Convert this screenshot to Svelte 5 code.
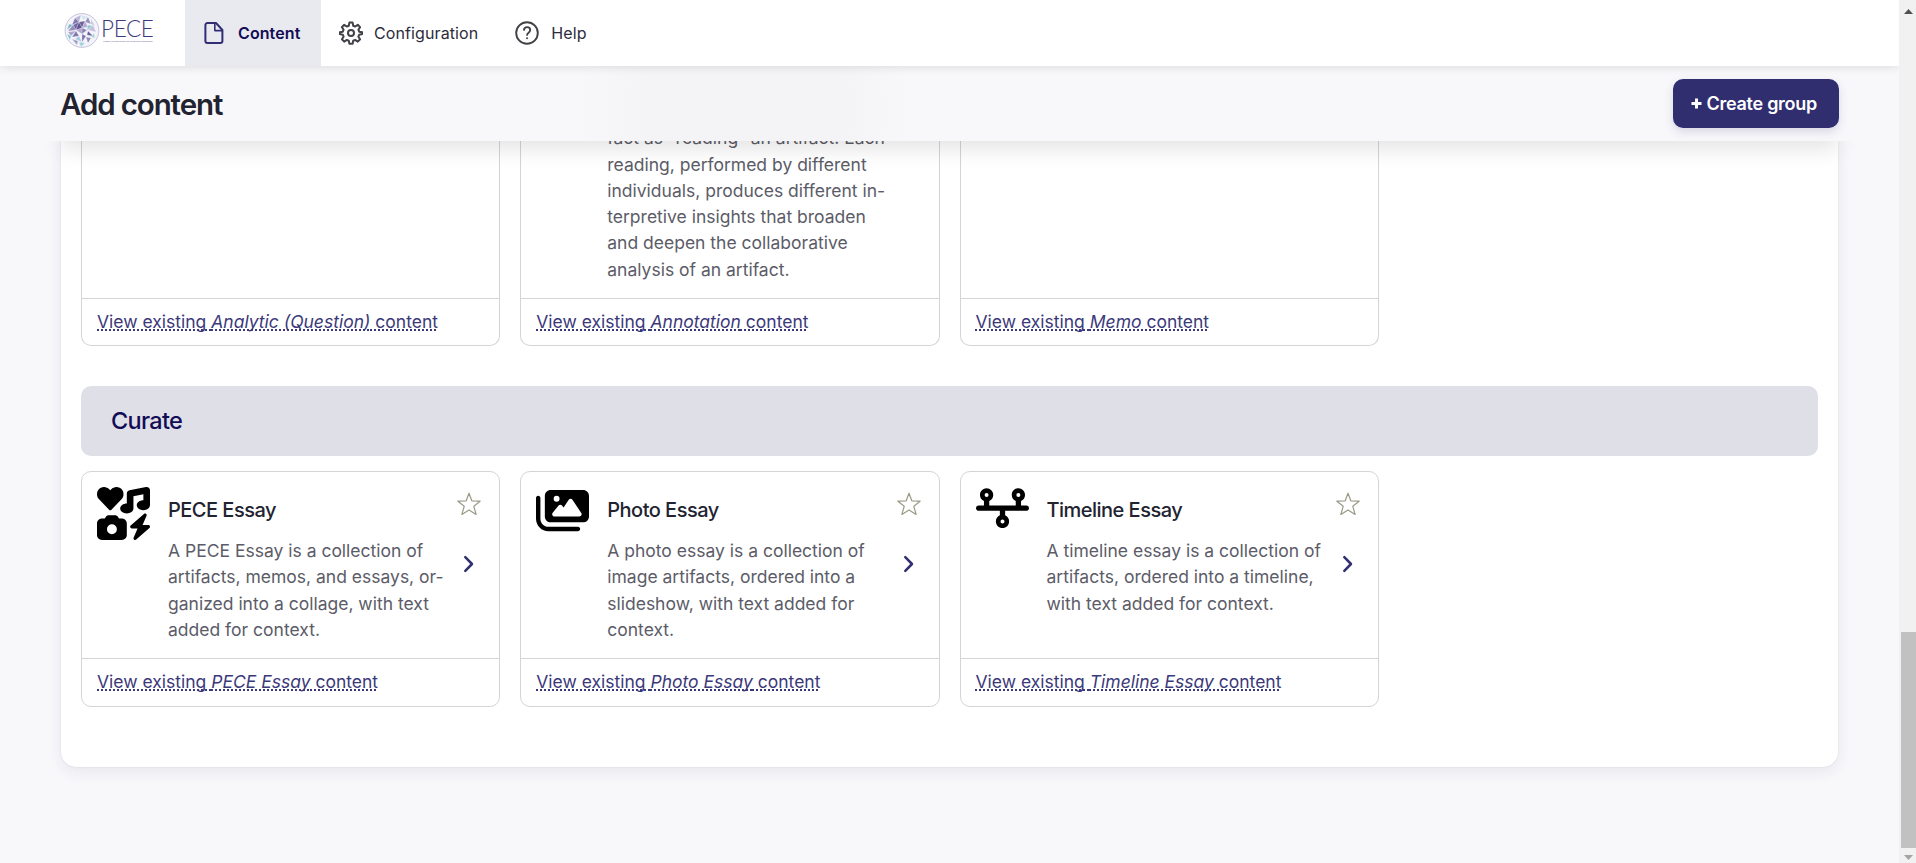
<script>
  const icons = {
    collage: {
      box: '0 0 512 512',
      d: 'M500.3 7.3C507.7 13.3 512 22.4 512 32V176c0 26.5-28.7 48-64 48s-64-21.5-64-48s28.7-48 64-48V71L352 90.2V208c0 26.5-28.7 48-64 48s-64-21.5-64-48s28.7-48 64-48V64c0-15.3 10.8-28.4 25.7-31.4l160-32c9.4-1.9 19.1 .6 26.6 6.6zM74.7 304l11.8-17.8c5.9-8.9 15.9-14.2 26.6-14.2h61.7c10.7 0 20.7 5.3 26.6 14.2L213.3 304H240c26.5 0 48 21.5 48 48V464c0 26.5-21.5 48-48 48H48c-26.5 0-48-21.5-48-48V352c0-26.5 21.5-48 48-48H74.7zM192 408a48 48 0 1 0 -96 0 48 48 0 1 0 96 0zM478.7 278.3L440.3 368H496c6.7 0 12.6 4.1 15 10.4s.6 13.3-4.4 17.7l-128 112c-5.6 4.9-13.9 5.3-19.9 .9s-8.2-12.4-5.3-19.2L391.7 400H336c-6.7 0-12.6-4.1-15-10.4s-.6-13.3 4.4-17.7l128-112c5.6-4.9 13.9-5.3 19.9-.9s8.2 12.4 5.3 19.2zm-339-59.2c-6.5 6.5-17 6.5-23 0L19.9 119.2c-28-29-26.5-76.9 5-103.9c27-23.5 68.4-19 93.4 6.5l10 10.5 9.5-10.5c25-25.5 65.9-30 93.9-6.5c31 27 32.5 74.9 4.5 103.9l-96.4 99.9z'
    },
    images: {
      box: '0 0 576 512',
      d: 'M160 32c-35.3 0-64 28.7-64 64V320c0 35.3 28.7 64 64 64H512c35.3 0 64-28.7 64-64V96c0-35.3-28.7-64-64-64H160zM396 138.7l96 144c4.9 7.4 5.4 16.8 1.2 24.6S480.9 320 472 320H328 280 200c-9.2 0-17.6-5.3-21.6-13.6s-2.9-18.2 2.9-25.4l64-80c4.6-5.7 11.4-9 18.7-9s14.2 3.3 18.7 9l17.3 21.6 56-84C360.5 132 368 128 376 128s15.5 4 20 10.7zM192 128a32 32 0 1 1 64 0 32 32 0 1 1 -64 0zM48 120c0-13.3-10.7-24-24-24S0 106.7 0 120V344c0 75.1 60.9 136 136 136H456c13.3 0 24-10.7 24-24s-10.7-24-24-24H136c-48.6 0-88-39.4-88-88V120z'
    },
    timeline: {
      box: '0 0 640 512',
      d: 'M128 72a24 24 0 1 1 0 48 24 24 0 1 1 0-48zm32 97.3c28.3-12.3 48-40.5 48-73.3c0-44.2-35.8-80-80-80S48 51.8 48 96c0 32.8 19.7 61 48 73.3V224H32c-17.7 0-32 14.3-32 32s14.3 32 32 32H288v54.7c-28.3 12.3-48 40.5-48 73.3c0 44.2 35.8 80 80 80s80-35.8 80-80c0-32.8-19.7-61-48-73.3V288H608c17.7 0 32-14.3 32-32s-14.3-32-32-32H544V169.3c28.3-12.3 48-40.5 48-73.3c0-44.2-35.8-80-80-80s-80 35.8-80 80c0 32.8 19.7 61 48 73.3V224H160V169.3zM488 96a24 24 0 1 1 48 0 24 24 0 1 1 -48 0zM320 392a24 24 0 1 1 0 48 24 24 0 1 1 0-48z'
    }
  };

  // Triangular facets of the globe in the logo: colour, then path.
  const facets = [
    ['#b9b4d6', 'M11 6l6-3-2 7z'],
    ['#cfe6ee', 'M17 3l7 2-5 3z'],
    ['#9a91c0', 'M24 5l3 7-6-2z'],
    ['#c9c4de', 'M27 7l4 7-4-2z'],
    ['#8379b0', 'M11 6l4 4-7 3z'],
    ['#6d6299', 'M15 10l6-1-3 7z'],
    ['#7fb9c9', 'M5 12l4 1-6 5z'],
    ['#7368a3', 'M9 13l6-3-3 8z'],
    ['#968cbd', 'M9 13l3 5-8 1z'],
    ['#5f548f', 'M15 10l3 6-6 2z'],
    ['#b4add2', 'M21 9l3 6-6 1z'],
    ['#8ccad4', 'M24 13l5 1-6 4z'],
    ['#c6c1de', 'M29 13l3 7-8-2z'],
    ['#8a80b4', 'M18 16l5 2-5 4z'],
    ['#aca5cc', 'M4 20l8-1-5 5z'],
    ['#b3a9cf', 'M12 18l6-2v6z'],
    ['#79c3d0', 'M3 22l4 2-1 4z'],
    ['#8278ae', 'M12 19l3 5-7 1z'],
    ['#a8cbe0', 'M15 24l3 6-7-3z'],
    ['#7f75ad', 'M18 22l4 2-4 6z'],
    ['#6a5f99', 'M24 19l5 5-6-1z'],
    ['#a6d5de', 'M30 21l1 5-4-1z'],
    ['#958bbb', 'M22 25l5 1-3 5z'],
    ['#a39bc8', 'M8 27l6 2-1 4z'],
    ['#a5d3dc', 'M15 30l6 1-4 4z']
  ];

  const analysis = [
    { name: 'Analytic (Question)', lines: [] },
    {
      name: 'Annotation',
      lines: [
        'fact as “reading” an artifact. Each',
        'reading, performed by different',
        'individuals, produces different in-',
        'terpretive insights that broaden',
        'and deepen the collaborative',
        'analysis of an artifact.'
      ]
    },
    { name: 'Memo', lines: [] }
  ];

  const curate = [
    {
      name: 'PECE Essay',
      icon: icons.collage,
      lines: ['A PECE Essay is a collection of', 'artifacts, memos, and essays, or-', 'ganized into a collage, with text', 'added for context.']
    },
    {
      name: 'Photo Essay',
      icon: icons.images,
      lines: ['A photo essay is a collection of', 'image artifacts, ordered into a', 'slideshow, with text added for', 'context.']
    },
    {
      name: 'Timeline Essay',
      icon: icons.timeline,
      lines: ['A timeline essay is a collection of', 'artifacts, ordered into a timeline,', 'with text added for context.']
    }
  ];
</script>

{#snippet footer(name)}
  <div class="card-foot"><a href="#top">View existing <em>{name}</em> content</a></div>
{/snippet}

<div class="window">
  <div class="page">
    <nav class="nav">
      <a class="logo" href="#top" aria-label="PECE">
        <svg width="36" height="36" viewBox="0 0 36 36">
          <circle cx="18" cy="18.500" r="16.900" fill="#f3f3fa" stroke="#b0aed0" stroke-width=".7" />
          <g stroke="#fff" stroke-width=".2">
            {#each facets as [fill, d]}<path {fill} {d} />{/each}
          </g>
        </svg>
        <span class="logo-text">
          <span class="logo-name">PECE</span>
          <svg class="logo-sub" width="51" height="4" viewBox="0 0 51 4">
            <text x="0" y="2.800" textLength="50" lengthAdjust="spacingAndGlyphs">Platform for Experimental and Collaborative Ethnography</text>
          </svg>
        </span>
      </a>
      <a class="tab active" href="#top">
        <svg width="20" height="22" viewBox="0 0 20 22" fill="none" stroke="#312e74" stroke-width="2" stroke-linejoin="round">
          <path d="M12 1H3.400a2 2 0 0 0-2 2v16a2 2 0 0 0 2 2h13a2 2 0 0 0 2-2V8z" />
          <path d="M10.800 1v7.600h7.600" stroke-width="1.600" />
        </svg>
        <span>Content</span>
      </a>
      <a class="tab" href="#top">
        <svg width="24" height="24" viewBox="0 0 24 24" fill="none" stroke="#414247" stroke-width="2" stroke-linejoin="round">
          <circle cx="12" cy="12" r="3" />
          <path d="M10.400 1.600h3.200l.6 3.100 2 .8 2.600-1.700 2.300 2.300-1.700 2.600.8 2 3.100.6v1.800l-3.100.6-.8 2 1.700 2.600-2.300 2.300-2.600-1.700-2 .8-.6 3.100h-3.200l-.6-3.100-2-.8-2.600 1.700-2.300-2.300 1.700-2.600-.8-2-3.100-.6v-1.800l3.100-.6.8-2-1.700-2.600 2.300-2.300 2.600 1.700 2-.8z" />
        </svg>
        <span>Configuration</span>
      </a>
      <a class="tab help" href="#top">
        <svg width="24" height="24" viewBox="0 0 24 24" fill="none" stroke="#414247" stroke-width="1.900" stroke-linecap="round">
          <circle cx="12" cy="12" r="10.800" />
          <path d="M9 8.900c.3-3.700 6.200-3.700 6.200.2 0 2.600-3.100 2.500-3.100 4.800" />
          <circle cx="12.100" cy="17.300" r=".4" stroke-width="1.300" />
        </svg>
        <span>Help</span>
      </a>
    </nav>

    <header class="header">
      <div class="header-inner">
        <h1>Add content</h1>
        <a class="button" href="#top"><svg width="11" height="11" viewBox="0 0 11 11"><path d="M5.500.5v10M.5 5.500h10" stroke="#fff" stroke-width="3" /></svg>Create group</a>
      </div>
    </header>

    <main class="panel">
      <section class="grid row-top">
        {#each analysis as item}
          <article class="card">
            <div class="card-body cut">
              <p>{#each item.lines as line}<span>{line}</span>{/each}</p>
            </div>
            {@render footer(item.name)}
          </article>
        {/each}
      </section>

      <h2>Curate</h2>

      <section class="grid row-bottom">
        {#each curate as item}
          <article class="card">
            <div class="card-body">
              <svg class="icon" viewBox={item.icon.box}><path d={item.icon.d} /></svg>
              <div class="copy">
                <h3>{item.name}</h3>
                <p>{#each item.lines as line}<span>{line}</span>{/each}</p>
              </div>
              <div class="actions">
                <svg width="24" height="24" viewBox="0 0 24 24" fill="none" stroke="#9a9a86" stroke-width="1.200" stroke-linejoin="round">
                  <path d="M12 1.200l2.800 7.600 8.300.4-6.300 5.100 2.300 8.100-7.100-4.500-7.100 4.500 2.300-8.100L.9 9.200l8.300-.4z" />
                </svg>
                <svg width="12" height="18" viewBox="0 0 12 18" fill="none" stroke="#312e74" stroke-width="2.500" stroke-linecap="round" stroke-linejoin="round">
                  <path d="M2.300 2.200L9 9l-6.700 6.800" />
                </svg>
              </div>
            </div>
            {@render footer(item.name)}
          </article>
        {/each}
      </section>
    </main>
  </div>

  <div class="scrollbar">
    <svg width="9" height="5" viewBox="0 0 9 5"><path d="M0 5L4.500 0 9 5z" fill="#505050" /></svg>
    <div class="thumb"></div>
    <svg width="9" height="5" viewBox="0 0 9 5"><path d="M0 0h9L4.500 5z" fill="#a3a3a3" /></svg>
  </div>
</div>

<style>
  :global(body) {
    margin: 0;
    background: #f8f8fb;
  }
  .window {
    display: flex;
    height: 863px;
    overflow: hidden;
    font-family: Inter, 'Liberation Sans', sans-serif;
    color: #222330;
  }
  a {
    color: inherit;
    text-decoration: none;
  }
  svg {
    display: block;
    flex: none;
  }
  .page {
    flex: 1;
    display: flex;
    flex-direction: column;
    background: #f8f8fb;
    overflow: hidden;
  }
  .nav {
    position: relative;
    z-index: 3;
    flex: none;
    display: flex;
    height: 66px;
    background: #fff;
    box-shadow: 0 0 10px rgba(0, 0, 0, 0.14);
  }
  .logo {
    box-sizing: border-box;
    width: 185px;
    display: flex;
    gap: 1px;
    padding: 11.500px 0 0 64px;
  }
  .logo-text {
    display: flex;
    flex-direction: column;
    padding-top: 5px;
  }
  .logo-name {
    height: 22px;
    font: 300 22.500px/23px Lato, sans-serif;
    letter-spacing: -0.350px;
    color: #3c3a7c;
  }
  .logo-sub {
    margin-left: 2px;
    overflow: visible;
    font: 400 2.500px Lato, sans-serif;
    fill: #6c6a9c;
  }
  .tab {
    display: flex;
    align-items: center;
    gap: 11px;
    padding: 0 18px;
    font-size: 16px;
    letter-spacing: 0.1px;
    color: #2c2c3c;
  }
  .tab.active {
    box-sizing: border-box;
    width: 136px;
    gap: 14px;
    padding: 0 19px;
    background: #e9e9f0;
    color: #110c55;
    font-weight: 600;
  }
  .tab.help {
    gap: 12px;
    padding-left: 19px;
  }
  .header {
    position: relative;
    z-index: 2;
    flex: none;
    height: 75px;
    padding: 0 60.500px 0 61px;
    background: radial-gradient(ellipse 165px 180px at 745px 45px, #f4f4f6 0%, #f4f4f6 60%, #f8f8fb 100%) #f8f8fb;
  }
  .header-inner {
    display: flex;
    align-items: center;
    justify-content: space-between;
    height: 75px;
  }
  .header::before {
    content: '';
    position: absolute;
    z-index: -1;
    inset: 0 61px;
    box-shadow: 0 8px 20px rgba(0, 0, 0, 0.11);
    clip-path: inset(75px -40px -40px -40px);
  }
  h1 {
    margin: 0 0 0 -1px;
    padding-top: 2px;
    font-size: 29.500px;
    font-weight: 600;
    letter-spacing: -1.120px;
    line-height: 73px;
  }
  .button {
    box-sizing: border-box;
    display: flex;
    align-items: center;
    gap: 5px;
    width: 166px;
    height: 49px;
    padding: 0 18px;
    border-radius: 10px;
    background: #312e70;
    box-shadow: 0 4px 10px rgba(49, 46, 112, 0.16);
    color: #fff;
    font-size: 18px;
    font-weight: 600;
    letter-spacing: -0.270px;
    white-space: nowrap;
  }
  .panel {
    box-sizing: border-box;
    width: 1777px;
    height: 626px;
    margin-left: 61px;
    padding: 0 20px;
    border-radius: 0 0 15px 15px;
    background: #fff;
    box-shadow: 0 5px 14px rgba(40, 40, 90, 0.08), 0 0 2px rgba(40, 40, 60, 0.12);
  }
  .grid {
    display: grid;
    grid-template-columns: repeat(4, 1fr);
    gap: 20px;
  }
  .row-top {
    height: 205px;
  }
  .row-bottom {
    height: 236px;
  }
  .card {
    box-sizing: border-box;
    display: flex;
    flex-direction: column;
    min-width: 0;
    min-height: 0;
    border: 1px solid #d4d4d8;
    border-radius: 10px;
  }
  .row-top .card {
    border-top: 0;
    border-radius: 0 0 10px 10px;
  }
  .card-body {
    flex: 1;
    min-height: 0;
    display: flex;
    padding: 15px 18px 0 15px;
  }
  .card-body.cut {
    align-items: flex-end;
    padding: 0 0 15px 86px;
  }
  .icon {
    width: 53px;
    align-self: flex-start;
  }
  .copy {
    flex: 1;
    padding: 8px 0 0 18px;
  }
  h3 {
    margin: 0 0 13px;
    font-size: 20px;
    font-weight: 500;
    letter-spacing: -0.520px;
    line-height: 30px;
  }
  p {
    margin: 0;
    font-size: 17.500px;
    line-height: 26.300px;
    color: #5c5c68;
    white-space: nowrap;
  }
  p span {
    display: block;
  }
  .actions {
    width: 24px;
    display: flex;
    flex-direction: column;
    align-items: center;
    gap: 39px;
    padding-top: 5px;
  }
  .card-foot {
    box-sizing: border-box;
    flex: none;
    height: 48px;
    padding-left: 15px;
    border-top: 1px solid #d4d4d8;
    font-size: 17.500px;
    line-height: 46px;
    color: #3c397a;
  }
  .row-top .card-foot {
    height: 47px;
  }
  .card-foot a {
    text-decoration: underline dotted 2px;
    text-underline-offset: 1px;
    text-decoration-skip-ink: none;
  }
  h2 {
    box-sizing: border-box;
    height: 70px;
    margin: 40px 0 15px;
    padding-left: 30px;
    border-radius: 10px;
    background: #dfdfe8;
    color: #110c55;
    font-size: 23.500px;
    font-weight: 500;
    letter-spacing: -0.700px;
    line-height: 69px;
  }
  .scrollbar {
    flex: none;
    width: 17px;
    box-sizing: border-box;
    display: flex;
    flex-direction: column;
    align-items: center;
    padding: 9px 0 3px 2px;
    background: #f1f1f1;
  }
  .thumb {
    width: 15px;
    height: 216px;
    margin: auto 0 7px;
    background: #c1c1c1;
  }
</style>
